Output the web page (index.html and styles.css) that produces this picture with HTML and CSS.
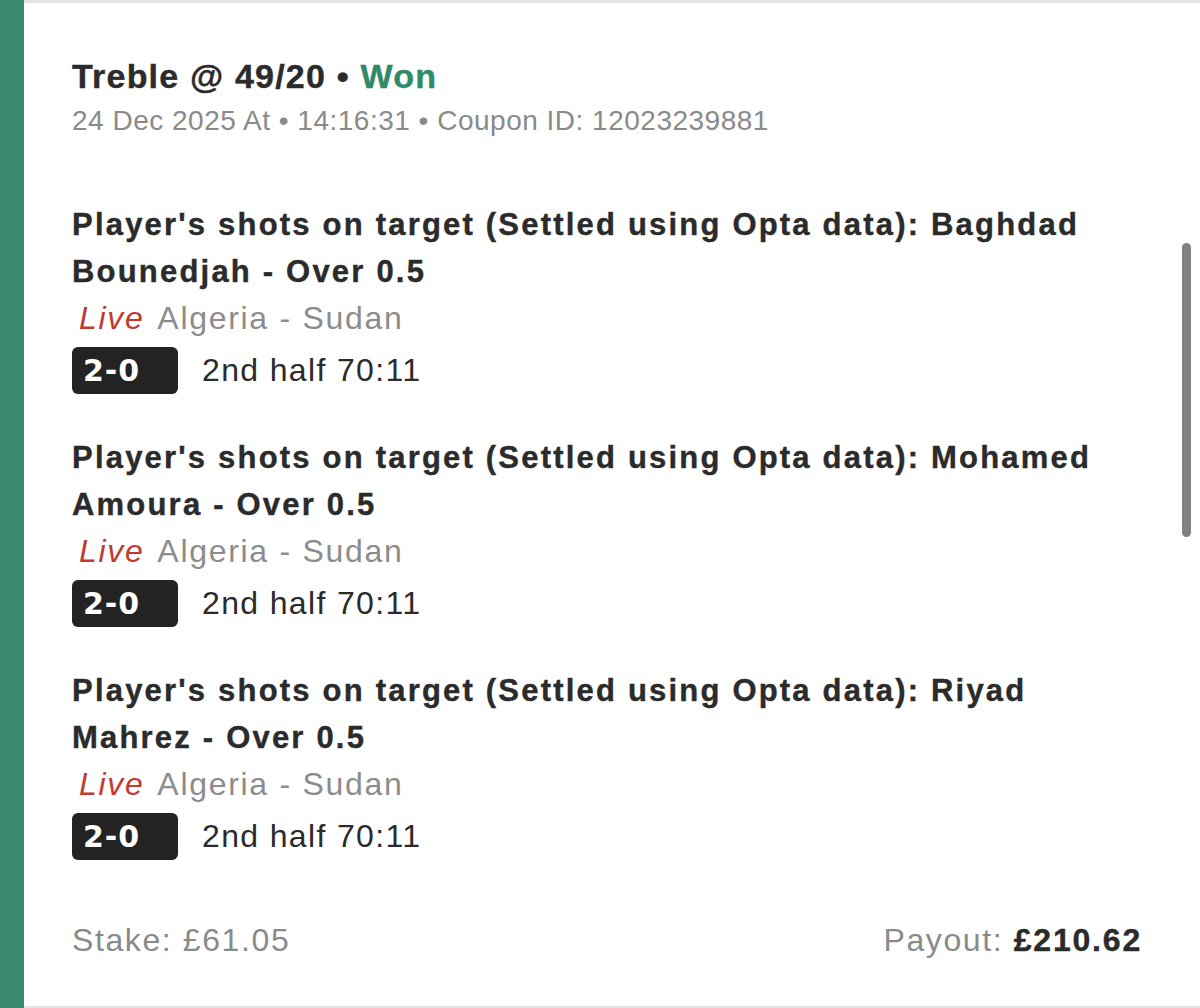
FILE: index.html
```html
<!DOCTYPE html>
<html lang="en">
<head>
<meta charset="utf-8">
<title>Bet</title>
<link rel="stylesheet" href="styles.css">
</head>
<body>
<div class="card">
  <div class="accent"></div>
  <div class="content">
    <div class="head">
      <div class="title">Treble @ 49/20 <span class="dot">•</span> <span class="won">Won</span></div>
      <div class="meta">24 Dec 2025 At • 14:16:31 • Coupon ID: 12023239881</div>
    </div>
    <div class="legs">
      <div class="leg">
        <div class="leg-title">Player's shots on target (Settled using Opta data): Baghdad Bounedjah - Over 0.5</div>
        <div class="event"><span class="live">Live</span> Algeria - Sudan</div>
        <div class="score-row"><span class="score">2-0</span><span class="clock">2nd half 70:11</span></div>
      </div>
      <div class="leg">
        <div class="leg-title">Player's shots on target (Settled using Opta data): Mohamed Amoura - Over 0.5</div>
        <div class="event"><span class="live">Live</span> Algeria - Sudan</div>
        <div class="score-row"><span class="score">2-0</span><span class="clock">2nd half 70:11</span></div>
      </div>
      <div class="leg">
        <div class="leg-title">Player's shots on target (Settled using Opta data): Riyad Mahrez - Over 0.5</div>
        <div class="event"><span class="live">Live</span> Algeria - Sudan</div>
        <div class="score-row"><span class="score">2-0</span><span class="clock">2nd half 70:11</span></div>
      </div>
    </div>
    <div class="foot">
      <div class="stake">Stake: £61.05</div>
      <div class="payout">Payout: <span class="amount">£210.62</span></div>
    </div>
    <div class="scrollbar"></div>
  </div>
</div>
</body>
</html>
```
FILE: styles.css
```css
* { box-sizing: border-box; }
html, body { margin: 0; padding: 0; background: #ffffff; }
body { font-family: "Liberation Sans", Arial, sans-serif; color: #2b2b2b; }

.card {
  height: 1008px;
  display: flex;
}
.accent {
  width: 24px;
  flex: none;
  background: #3b8a6f;
}
.content {
  position: relative;
  flex: 1;
  border-top: 3px solid #e3e3e3;
  border-bottom: 2px solid #e3e3e3;
  padding: 53px 58px 0 48px;
  display: flex;
  flex-direction: column;
}

.title {
  font-size: 34px;
  line-height: 40px;
  font-weight: 700;
  letter-spacing: 1.2px;
  color: #2b2b2b;
  -webkit-text-stroke: 0.4px currentColor;
}
.title .won { color: #2f8a68; }

.meta {
  margin-top: 8px;
  font-size: 28px;
  line-height: 34px;
  letter-spacing: 0.5px;
  color: #8a8a8a;
}

.legs {
  margin-top: 63px;
  display: flex;
  flex-direction: column;
  gap: 40px;
}

.leg-title {
  font-size: 31px;
  line-height: 47px;
  font-weight: 700;
  letter-spacing: 2.2px;
  color: #2b2b2b;
  -webkit-text-stroke: 0.4px currentColor;
}

.event {
  font-size: 32px;
  line-height: 46px;
  letter-spacing: 1.7px;
  color: #8c8c8c;
}
.event .live {
  color: #c23a2f;
  font-style: italic;
  margin-left: 7px;
  margin-right: 4px;
}

.score-row {
  margin-top: 6px;
  display: flex;
  align-items: center;
  gap: 24px;
}
.score {
  width: 106px;
  height: 47px;
  background: #232323;
  color: #ffffff;
  border-radius: 6px;
  font-family: "DejaVu Sans", "Liberation Sans", sans-serif;
  font-weight: 700;
  font-size: 30px;
  line-height: 47px;
  letter-spacing: 1px;
  padding-left: 11px;
}
.clock {
  font-size: 32px;
  letter-spacing: 1.35px;
  color: #2b2b2b;
}

.foot {
  margin-top: 60px;
  display: flex;
  justify-content: space-between;
  align-items: baseline;
  font-size: 32px;
  line-height: 40px;
  letter-spacing: 1.6px;
  color: #8a8a8a;
}
.payout .amount {
  color: #2b2b2b;
  font-weight: 700;
  letter-spacing: 1.8px;
  -webkit-text-stroke: 0.4px currentColor;
}

.scrollbar {
  position: absolute;
  left: 1158px;
  top: 240px;
  width: 9px;
  height: 294px;
  border-radius: 5px;
  background: #818181;
}
```
